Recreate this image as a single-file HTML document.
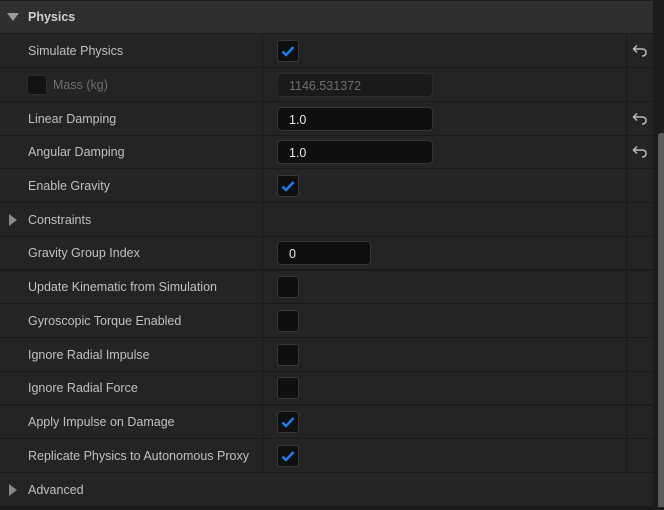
<!DOCTYPE html>
<html><head><style>
*{margin:0;padding:0;box-sizing:border-box}
body{width:664px;height:510px;background:#1a1a1a;overflow:hidden;font-family:"Liberation Sans",sans-serif;font-size:12.5px;color:#c0c0c0;position:relative}
.hdr{position:absolute;left:0;top:0;width:653px;height:33px;background:#2f2f2f;border-top:1px solid #1c1c1c}
.hdr span{position:absolute;left:28px;top:9px;font-weight:bold;color:#d0d0d0;font-size:12.5px}
.row{position:absolute;left:0;width:653px;background:#242424}
.lbl{position:absolute;left:28px;top:50%;transform:translateY(-50%);white-space:nowrap}
.vl{position:absolute;top:0;bottom:0;width:1px;background:#1a1a1a}
.cb{position:absolute;left:277px;top:50%;margin-top:-11px;width:22px;height:22px;background:#0f0f0f;border:1px solid #383838;border-radius:3px}
.cb svg{position:absolute;left:3px;top:4px}
.inp{position:absolute;left:277px;top:50%;margin-top:-12px;width:156px;height:24px;background:#0f0f0f;border:1px solid #363636;border-radius:4px;padding:5px 0 0 11px;color:#e8e8e8}
.rev{position:absolute;left:632px;top:50%;margin-top:-7px}
.tri{position:absolute;left:9px;top:50%;margin-top:-6px;width:0;height:0;border-top:6px solid transparent;border-bottom:6px solid transparent;border-left:8px solid #8a8a8a}
</style></head><body>
<div class="hdr"><div style="position:absolute;left:7px;top:12px;width:0;height:0;border-left:6px solid transparent;border-right:6px solid transparent;border-top:8px solid #9a9a9a"></div><span>Physics</span></div>

<div class="row" style="top:34px;height:33px"><span class="lbl">Simulate Physics</span><div class="vl" style="left:262px"></div><div class="vl" style="left:626px"></div>
<div class="cb"><svg width="14" height="12" viewBox="0 0 14 12"><path d="M1.5 6.5 L5 10 L12.5 2" stroke="#1a7ff0" stroke-width="2.4" fill="none"/></svg></div>
<svg class="rev" width="16" height="14" viewBox="0 0 16 14"><path d="M5 1.5 L1.5 5 L5 8.5 M1.5 5 H10 Q14 5 14 8.5 Q14 12 10 12" stroke="#bbb" stroke-width="1.5" fill="none"/></svg></div>

<div class="row" style="top:68px;height:33px"><div style="position:absolute;left:27px;top:7px;width:20px;height:20px;background:#121212;border:1px solid #2c2c2c;border-radius:3px"></div><span class="lbl" style="left:53px;color:#6e6e6e">Mass (kg)</span><div class="vl" style="left:262px"></div><div class="vl" style="left:626px"></div>
<div class="inp" style="background:#1a1a1a;border-color:#2c2c2c;color:#6e6e6e">1146.531372</div></div>

<div class="row" style="top:102px;height:33px"><span class="lbl">Linear Damping</span><div class="vl" style="left:262px"></div><div class="vl" style="left:626px"></div><div class="inp">1.0</div>
<svg class="rev" width="16" height="14" viewBox="0 0 16 14"><path d="M5 1.5 L1.5 5 L5 8.5 M1.5 5 H10 Q14 5 14 8.5 Q14 12 10 12" stroke="#bbb" stroke-width="1.5" fill="none"/></svg></div>

<div class="row" style="top:136px;height:32px"><span class="lbl">Angular Damping</span><div class="vl" style="left:262px"></div><div class="vl" style="left:626px"></div><div class="inp">1.0</div>
<svg class="rev" width="16" height="14" viewBox="0 0 16 14"><path d="M5 1.5 L1.5 5 L5 8.5 M1.5 5 H10 Q14 5 14 8.5 Q14 12 10 12" stroke="#bbb" stroke-width="1.5" fill="none"/></svg></div>

<div class="row" style="top:169px;height:33px"><span class="lbl">Enable Gravity</span><div class="vl" style="left:262px"></div><div class="vl" style="left:626px"></div>
<div class="cb"><svg width="14" height="12" viewBox="0 0 14 12"><path d="M1.5 6.5 L5 10 L12.5 2" stroke="#1a7ff0" stroke-width="2.4" fill="none"/></svg></div></div>

<div class="row" style="top:203px;height:33px"><div class="tri"></div><span class="lbl">Constraints</span><div class="vl" style="left:262px"></div><div class="vl" style="left:626px"></div></div>

<div class="row" style="top:237px;height:32px"><span class="lbl">Gravity Group Index</span><div class="vl" style="left:262px"></div><div class="vl" style="left:626px"></div><div class="inp" style="width:94px">0</div></div>

<div class="row" style="top:271px;height:32px"><span class="lbl">Update Kinematic from Simulation</span><div class="vl" style="left:262px"></div><div class="vl" style="left:626px"></div><div class="cb"></div></div>
<div class="row" style="top:304px;height:33px"><span class="lbl">Gyroscopic Torque Enabled</span><div class="vl" style="left:262px"></div><div class="vl" style="left:626px"></div><div class="cb"></div></div>
<div class="row" style="top:338px;height:33px"><span class="lbl">Ignore Radial Impulse</span><div class="vl" style="left:262px"></div><div class="vl" style="left:626px"></div><div class="cb"></div></div>
<div class="row" style="top:372px;height:32px"><span class="lbl">Ignore Radial Force</span><div class="vl" style="left:262px"></div><div class="vl" style="left:626px"></div><div class="cb"></div></div>

<div class="row" style="top:406px;height:32px"><span class="lbl">Apply Impulse on Damage</span><div class="vl" style="left:262px"></div><div class="vl" style="left:626px"></div>
<div class="cb"><svg width="14" height="12" viewBox="0 0 14 12"><path d="M1.5 6.5 L5 10 L12.5 2" stroke="#1a7ff0" stroke-width="2.4" fill="none"/></svg></div></div>
<div class="row" style="top:439px;height:33px"><span class="lbl">Replicate Physics to Autonomous Proxy</span><div class="vl" style="left:262px"></div><div class="vl" style="left:626px"></div>
<div class="cb"><svg width="14" height="12" viewBox="0 0 14 12"><path d="M1.5 6.5 L5 10 L12.5 2" stroke="#1a7ff0" stroke-width="2.4" fill="none"/></svg></div></div>

<div class="row" style="top:473px;height:33px"><div class="tri"></div><span class="lbl">Advanced</span></div>

<div style="position:absolute;left:653px;top:0;width:11px;height:510px;background:#1c1c1c"></div>
<div style="position:absolute;left:658px;top:133px;width:6px;height:374px;background:#5b5b5b;border-radius:3px 0 0 0"></div>
</body></html>
